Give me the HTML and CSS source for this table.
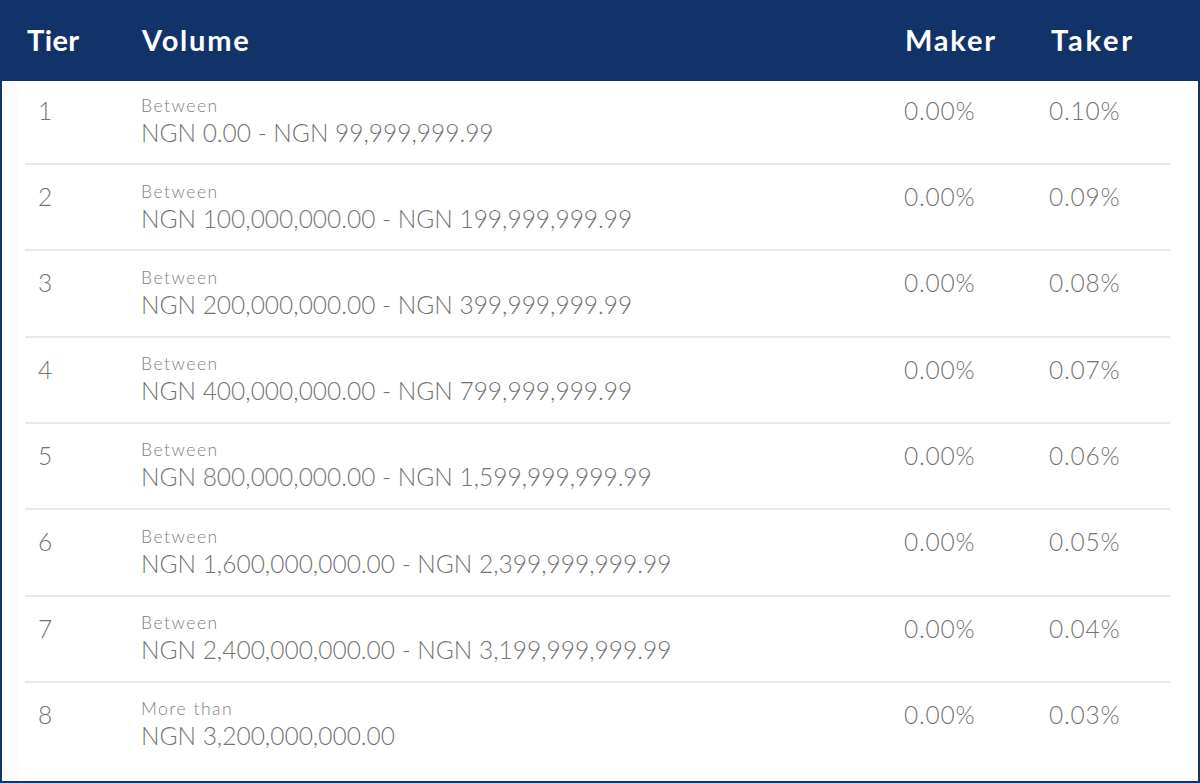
FILE: index.html
```html
<!DOCTYPE html>
<html>
<head>
<meta charset="utf-8">
<link rel="stylesheet" href="styles.css">
</head>
<body>
<div class="fees">
  <div class="head">
    <div class="h-tier">Tier</div>
    <div>Volume</div>
    <div>Maker</div>
    <div class="h-taker">Taker</div>
  </div>
  <div class="rows">
    <div class="row"><div class="tier">1</div><div class="vol"><span class="lbl">Between</span><span class="amt">NGN 0.00 - NGN 99,999,999.99</span></div><div class="pct">0.00%</div><div class="pct">0.10%</div></div>
    <div class="row"><div class="tier">2</div><div class="vol"><span class="lbl">Between</span><span class="amt">NGN 100,000,000.00 - NGN 199,999,999.99</span></div><div class="pct">0.00%</div><div class="pct">0.09%</div></div>
    <div class="row"><div class="tier">3</div><div class="vol"><span class="lbl">Between</span><span class="amt">NGN 200,000,000.00 - NGN 399,999,999.99</span></div><div class="pct">0.00%</div><div class="pct">0.08%</div></div>
    <div class="row"><div class="tier">4</div><div class="vol"><span class="lbl">Between</span><span class="amt">NGN 400,000,000.00 - NGN 799,999,999.99</span></div><div class="pct">0.00%</div><div class="pct">0.07%</div></div>
    <div class="row"><div class="tier">5</div><div class="vol"><span class="lbl">Between</span><span class="amt">NGN 800,000,000.00 - NGN 1,599,999,999.99</span></div><div class="pct">0.00%</div><div class="pct">0.06%</div></div>
    <div class="row"><div class="tier">6</div><div class="vol"><span class="lbl">Between</span><span class="amt">NGN 1,600,000,000.00 - NGN 2,399,999,999.99</span></div><div class="pct">0.00%</div><div class="pct">0.05%</div></div>
    <div class="row"><div class="tier">7</div><div class="vol"><span class="lbl">Between</span><span class="amt">NGN 2,400,000,000.00 - NGN 3,199,999,999.99</span></div><div class="pct">0.00%</div><div class="pct">0.04%</div></div>
    <div class="row last"><div class="tier">8</div><div class="vol"><span class="lbl">More than</span><span class="amt">NGN 3,200,000,000.00</span></div><div class="pct">0.00%</div><div class="pct">0.03%</div></div>
  </div>
</div>
</body>
</html>
```
FILE: styles.css
```css
html, body {
  margin: 0;
  padding: 0;
  background: #ffffff;
}

.fees {
  width: 1200px;
  height: 783px;
  box-sizing: border-box;
  border: 2px solid #12326a;
  border-top: 0;
  display: flex;
  flex-direction: column;
  font-family: Lato, "Liberation Sans", sans-serif;
  overflow: hidden;
}

.head {
  height: 81px;
  box-sizing: border-box;
  padding: 0 0 2px 25px;
  background: #12326a;
  color: #ffffff;
  font-weight: 700;
  font-size: 29px;
  letter-spacing: 1.8px;
  display: grid;
  grid-template-columns: 115px 763px 146px 1fr;
  align-items: center;
  flex: none;
}

.h-tier {
  letter-spacing: 0.4px;
}

.h-taker {
  letter-spacing: 2.8px;
}

.rows {
  flex: 1;
  display: flex;
  flex-direction: column;
  background: linear-gradient(to right, #fbfbfb 0, #fbfbfb 16px, #ffffff 16px);
}

.row {
  margin: 0 28px 0 23px;
  height: 84.33px;
  flex: none;
  border-bottom: 2px solid #e9e9e9;
  display: grid;
  grid-template-columns: 116px 763px 145px 1fr;
  align-items: start;
  color: #737373;
  font-weight: 300;
  background: #ffffff;
}

.row:first-child {
  height: 82px;
}

.row:first-child > * {
  margin-top: -2px;
}

.row.last {
  border-bottom: 0;
  flex: 1;
}

.tier {
  padding-left: 13px;
  padding-top: 17px;
  font-size: 24.5px;
  line-height: 29px;
}

.vol {
  display: flex;
  flex-direction: column;
  padding-top: 14.5px;
}

.lbl {
  font-size: 17.5px;
  line-height: 24px;
  letter-spacing: 1.5px;
  color: #7f7f7f;
}

.amt {
  font-size: 24.5px;
  line-height: 30px;
}

.pct {
  padding-top: 17px;
  font-size: 24.5px;
  line-height: 29px;
  letter-spacing: 0.8px;
}
```
